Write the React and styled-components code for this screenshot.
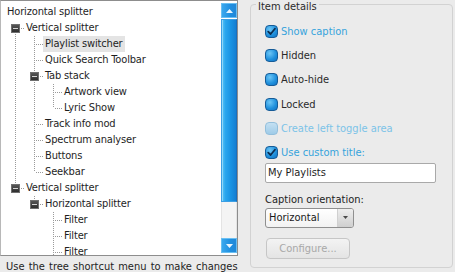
import React from 'react';
import styled, { createGlobalStyle, css } from 'styled-components';

const GlobalStyle = createGlobalStyle`
  html, body { margin: 0; padding: 0; }
  body {
    background: #ebebeb;
    font-family: "DejaVu Sans Condensed", "DejaVu Sans", sans-serif;
    font-size: 11px;
    color: #1e1e1e;
  }
`;

const dotV = css`
  background-image: linear-gradient(to bottom, #9a9a9a 50%, transparent 50%);
  background-size: 1px 2px;
  background-repeat: repeat-y;
`;

const Page = styled.div`
  display: flex;
  width: 455px;
  height: 272px;
  overflow: hidden;
`;

const LeftCol = styled.div`
  display: flex;
  flex-direction: column;
  width: 238px;
  flex: none;
`;

const TreeBox = styled.div`
  display: flex;
  height: 254px;
  background: #fff;
  border: 1px solid #8d8d8d;
  border-left-color: #b8b8b8;
`;

const TreeContent = styled.div`
  flex: 1;
  overflow: hidden;
  padding: 3px 0 0 4px;
`;

const Row = styled.div`
  display: flex;
  height: 16px;
  align-items: stretch;
  white-space: nowrap;
`;

const Guide = styled.div`
  width: 19px;
  flex: none;
  ${p => p.$on && css`${dotV} background-position: 10px 0;`}
`;

const Connector = styled.div`
  width: 19px;
  flex: none;
  display: grid;
  grid-template-columns: 10px 1px 1fr;
  grid-template-rows: 8px 1px 1fr;
`;

const VTop = styled.div`
  grid-column: 2;
  grid-row: 1;
  ${dotV}
`;

const VBottom = styled.div`
  grid-column: 2;
  grid-row: 2 / 4;
  ${dotV}
`;

const HStub = styled.div`
  grid-column: 3;
  grid-row: 2;
  background-image: linear-gradient(to right, transparent 50%, #9a9a9a 50%);
  background-size: 2px 1px;
  background-repeat: repeat-x;
`;

const Expander = styled.div`
  grid-column: 1 / 4;
  grid-row: 1 / 4;
  align-self: center;
  margin-left: 6px;
  width: 9px;
  height: 9px;
  box-sizing: border-box;
  background: linear-gradient(#555, #2e2e2e);
  border: 1px solid #6f6f6f;
  display: flex;
  align-items: center;
  justify-content: center;
  z-index: 1;
`;

const Minus = styled.span`
  width: 5px;
  height: 1px;
  background: #d4d4d4;
`;

const Label = styled.span`
  padding: 0 2px;
  line-height: 16px;
  letter-spacing: -0.15px;
  background: ${p => (p.$selected ? '#e4e4e4' : 'transparent')};
`;

const ScrollBar = styled.div`
  width: 16px;
  flex: none;
  margin: 2px 0 2px;
  display: flex;
  flex-direction: column;
`;

const ScrollButton = styled.div`
  height: 15px;
  box-sizing: border-box;
  border: 1px solid #69bff2;
  background: linear-gradient(to right, #3aa8ee, #1f8fe0 60%, #2288d8);
  display: flex;
  align-items: center;
  justify-content: center;
`;

const Thumb = styled.div`
  height: 183px;
  margin-top: 1px;
  box-sizing: border-box;
  border: 1px solid #3c9fe4;
  border-right-color: #1a6fbf;
  background: linear-gradient(to right, #58c4f6 0%, #2aa6ee 25%, #1a94e4 60%, #157fd2 100%);
  box-shadow: inset 1px 0 0 rgba(255,255,255,0.35);
`;

const Track = styled.div`
  flex: 1;
  background: #f4f4f4;
  border-left: 1px solid #e4e4e4;
  border-right: 1px solid #e4e4e4;
`;

const Status = styled.div`
  padding: 3px 0 0 6px;
  line-height: 15px;
  color: #1e1e1e;
  white-space: nowrap;
  word-spacing: 1px;
`;

const GroupBox = styled.div`
  margin: 4px 0 0 12px;
  width: 203px;
  height: 264px;
  box-sizing: border-box;
  border: 1px solid #d2d2d2;
  border-radius: 4px;
  display: flex;
  flex-direction: column;
  align-items: flex-start;
  padding-left: 14px;
`;

const Legend = styled.div`
  margin: -5px 0 0 -9px;
  padding: 0 2px;
  height: 13px;
  line-height: 13px;
  background: #ebebeb;
  color: #2a2a2a;
`;

const CheckList = styled.div`
  margin-top: 11.5px;
  display: flex;
  flex-direction: column;
  gap: 11.4px;
`;

const CheckRow = styled.label`
  display: flex;
  align-items: center;
  gap: 3px;
  height: 13px;
  white-space: nowrap;
  color: ${p => (p.$tone === 'on' ? '#36a3dc' : p.$tone === 'dim' ? '#7cc3e8' : '#2a2a2a')};
`;

const Box = styled.span`
  width: 13px;
  height: 13px;
  box-sizing: border-box;
  border-radius: 4px;
  flex: none;
  display: flex;
  align-items: center;
  justify-content: center;
  ${p =>
    p.$disabled
      ? css`
          border: 1px solid #93bfdc;
          background: linear-gradient(#c4e0f2, #9ecbe8);
        `
      : css`
          border: 1px solid #165c98;
          background: radial-gradient(circle at 35% 30%, #6cc6f6, #1e8fdc 60%, #1472c2);
        `}
`;

const TextInput = styled.div`
  margin-top: 3.5px;
  width: 171px;
  height: 20px;
  box-sizing: border-box;
  border: 1px solid #a9a9a9;
  border-radius: 2px;
  background: #fff;
  padding-left: 2px;
  line-height: 18px;
  color: #1e1e1e;
`;

const FieldLabel = styled.div`
  margin-top: 10px;
  line-height: 14px;
  color: #222;
`;

const Select = styled.div`
  margin-top: 1px;
  width: 89px;
  height: 20px;
  box-sizing: border-box;
  border: 1px solid #8f8f8f;
  border-radius: 3px;
  background: linear-gradient(#ffffff, #f2f2f2);
  display: flex;
  overflow: hidden;
`;

const SelectValue = styled.div`
  flex: 1;
  padding-left: 3px;
  line-height: 18px;
  color: #1a1a1a;
`;

const SelectArrow = styled.div`
  width: 15px;
  background: linear-gradient(#eeeeee, #cfcfcf);
  border-left: 1px solid #d0d0d0;
  display: flex;
  align-items: center;
  justify-content: center;
`;

const Button = styled.div`
  margin: 10px 0 0 1px;
  width: 84px;
  height: 21px;
  box-sizing: border-box;
  border: 1px solid #c6c6c6;
  border-radius: 4px;
  background: linear-gradient(#f3f3f3, #e4e4e4);
  color: #a8a8a8;
  text-align: center;
  line-height: 19px;
`;

const Check = () => (
  <svg width="9" height="9" viewBox="0 0 9 9">
    <path d="M1.2 4.6 L3.6 7 L7.9 1.8" fill="none" stroke="#0c2e52" strokeWidth="1.8" strokeLinecap="round" strokeLinejoin="round" />
  </svg>
);

const rows = [
  { label: 'Horizontal splitter', root: true },
  { label: 'Vertical splitter', guides: [], top: false, bottom: true, exp: true },
  { label: 'Playlist switcher', guides: [true], top: true, bottom: true, sel: true },
  { label: 'Quick Search Toolbar', guides: [true], top: true, bottom: true },
  { label: 'Tab stack', guides: [true], top: true, bottom: true, exp: true },
  { label: 'Artwork view', guides: [true, true], top: true, bottom: true },
  { label: 'Lyric Show', guides: [true, true], top: true, bottom: false },
  { label: 'Track info mod', guides: [true], top: true, bottom: true },
  { label: 'Spectrum analyser', guides: [true], top: true, bottom: true },
  { label: 'Buttons', guides: [true], top: true, bottom: true },
  { label: 'Seekbar', guides: [true], top: true, bottom: false },
  { label: 'Vertical splitter', guides: [], top: true, bottom: false, exp: true },
  { label: 'Horizontal splitter', guides: [false], top: true, bottom: false, exp: true },
  { label: 'Filter', guides: [false, false], top: true, bottom: true },
  { label: 'Filter', guides: [false, false], top: true, bottom: true },
  { label: 'Filter', guides: [false, false], top: true, bottom: true },
];

const checks = [
  { label: 'Show caption', checked: true, tone: 'on' },
  { label: 'Hidden' },
  { label: 'Auto-hide' },
  { label: 'Locked' },
  { label: 'Create left toggle area', disabled: true, tone: 'dim' },
  { label: 'Use custom title:', checked: true, tone: 'on' },
];

export default function App() {
  return (
    <>
      <GlobalStyle />
      <Page>
        <LeftCol>
          <TreeBox>
            <TreeContent>
              {rows.map((r, i) => (
                <Row key={i}>
                  {!r.root && r.guides.map((g, j) => <Guide key={j} $on={g} />)}
                  {!r.root && (
                    <Connector>
                      {r.top && <VTop />}
                      {r.bottom && <VBottom />}
                      <HStub />
                      {r.exp && (
                        <Expander>
                          <Minus />
                        </Expander>
                      )}
                    </Connector>
                  )}
                  <Label $selected={r.sel}>{r.label}</Label>
                </Row>
              ))}
            </TreeContent>
            <ScrollBar>
              <ScrollButton>
                <svg width="7" height="4" viewBox="0 0 7 4">
                  <path d="M0 4 L3.5 0 L7 4 Z" fill="#eaf6ff" />
                </svg>
              </ScrollButton>
              <Thumb />
              <Track />
              <ScrollButton>
                <svg width="7" height="4" viewBox="0 0 7 4">
                  <path d="M0 0 L7 0 L3.5 4 Z" fill="#eaf6ff" />
                </svg>
              </ScrollButton>
            </ScrollBar>
          </TreeBox>
          <Status>Use the tree shortcut menu to make changes</Status>
        </LeftCol>
        <GroupBox>
          <Legend>Item details</Legend>
          <CheckList>
            {checks.map((c, i) => (
              <CheckRow key={i} $tone={c.tone}>
                <Box $disabled={c.disabled}>{c.checked && <Check />}</Box>
                {c.label}
              </CheckRow>
            ))}
          </CheckList>
          <TextInput>My Playlists</TextInput>
          <FieldLabel>Caption orientation:</FieldLabel>
          <Select>
            <SelectValue>Horizontal</SelectValue>
            <SelectArrow>
              <svg width="5" height="3" viewBox="0 0 5 3">
                <path d="M0 0 L5 0 L2.5 3 Z" fill="#4a4a4a" />
              </svg>
            </SelectArrow>
          </Select>
          <Button>Configure...</Button>
        </GroupBox>
      </Page>
    </>
  );
}
